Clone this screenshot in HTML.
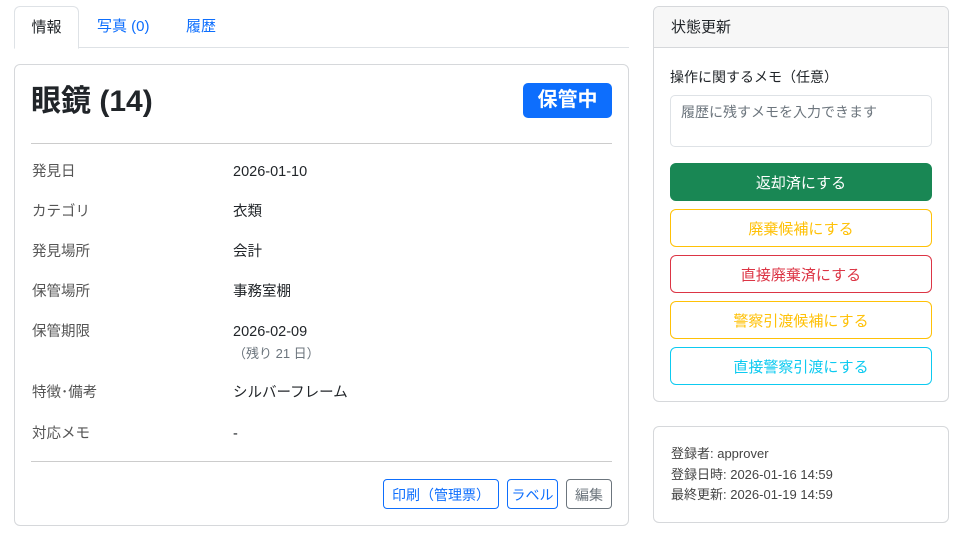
<!DOCTYPE html>
<html><head><meta charset="utf-8"><style>
*{box-sizing:border-box;margin:0;padding:0}
body{width:966px;height:544px;background:#fff;font-family:"Liberation Sans","Noto Sans CJK JP",sans-serif;color:#212529;font-size:14px;position:relative;overflow:hidden}
.abs{position:absolute}
.tabs{left:14px;top:6px;width:615px;height:42px;border-bottom:1px solid #dee2e6}
.tab{position:absolute;top:0;height:42px;line-height:42px;font-size:15px;color:#0d6efd}
.tab.act{left:0;width:65px;border:1px solid #dee2e6;border-bottom:1px solid #fff;border-radius:6px 6px 0 0;color:#212529;text-align:center;background:#fff;height:43px}
.card{border:1px solid #d6d8db;border-radius:6px;background:#fff}
.lbl{position:absolute;left:32px;color:#555;font-size:14.5px;line-height:20px}
.val{position:absolute;left:233px;font-size:14.5px;color:#212529;line-height:20px}
.btn{position:absolute;left:670px;width:262px;height:38px;border-radius:6px;text-align:center;line-height:38px;font-size:15px;border:1px solid}
.btn span{position:relative;top:1px}
.sb{position:absolute;top:479px;height:30px;border:1px solid;border-radius:4px;font-size:14px;line-height:30px;text-align:center}
</style></head><body>
<div class="abs tabs">
<div class="tab act">情報</div>
<div class="tab" style="left:83px">写真 (0)</div>
<div class="tab" style="left:172px">履歴</div>
</div>
<div class="abs card" style="left:14px;top:64px;width:615px;height:462px"></div>
<div class="abs" style="left:31px;top:82px;font-size:30px;font-weight:bold;line-height:40px">眼鏡 (14)</div>
<div class="abs" style="left:523px;top:83px;width:89px;height:35px;background:#0d6efd;color:#fff;border-radius:5px;font-size:20px;font-weight:bold;text-align:center;line-height:35px">保管中</div>
<div class="abs" style="left:31px;top:143px;width:581px;height:1px;background:#ccc"></div>
<div class="lbl" style="top:162px">発見日</div><div class="val" style="top:162px">2026-01-10</div>
<div class="lbl" style="top:202px">カテゴリ</div><div class="val" style="top:202px">衣類</div>
<div class="lbl" style="top:242px">発見場所</div><div class="val" style="top:242px">会計</div>
<div class="lbl" style="top:282px">保管場所</div><div class="val" style="top:282px">事務室棚</div>
<div class="lbl" style="top:322px">保管期限</div><div class="val" style="top:322px">2026-02-09</div>
<div class="val" style="top:344px;color:#6c757d;font-size:13px">（残り 21 日）</div>
<div class="lbl" style="top:383px">特徴･備考</div><div class="val" style="top:383px">シルバーフレーム</div>
<div class="lbl" style="top:424px">対応メモ</div><div class="val" style="top:424px">-</div>
<div class="abs" style="left:31px;top:461px;width:581px;height:1px;background:#ccc"></div>
<div class="sb" style="left:383px;width:116px;border-color:#0d6efd;color:#0d6efd">印刷（管理票）</div>
<div class="sb" style="left:507px;width:51px;border-color:#0d6efd;color:#0d6efd">ラベル</div>
<div class="sb" style="left:566px;width:46px;border-color:#6c757d;color:#6c757d">編集</div>

<div class="abs card" style="left:653px;top:6px;width:296px;height:396px;overflow:hidden">
<div style="height:41px;background:#f7f7f7;border-bottom:1px solid #d6d8db;padding-left:17px;line-height:42px;font-size:15px">状態更新</div>
</div>
<div class="abs" style="left:670px;top:67px;font-size:14px;line-height:20px">操作に関するメモ（任意）</div>
<div class="abs" style="left:670px;top:95px;width:262px;height:52px;border:1px solid #dee2e6;border-radius:5px;padding:6px 10px;color:#6c757d;font-size:14px">履歴に残すメモを入力できます</div>
<div class="btn" style="top:163px;background:#198754;border-color:#198754;color:#fff"><span>返却済にする</span></div>
<div class="btn" style="top:209px;border-color:#ffc107;color:#ffc107"><span>廃棄候補にする</span></div>
<div class="btn" style="top:255px;border-color:#dc3545;color:#dc3545"><span>直接廃棄済にする</span></div>
<div class="btn" style="top:301px;border-color:#ffc107;color:#ffc107"><span>警察引渡候補にする</span></div>
<div class="btn" style="top:347px;border-color:#0dcaf0;color:#0dcaf0"><span>直接警察引渡にする</span></div>

<div class="abs card" style="left:653px;top:426px;width:296px;height:97px"></div>
<div class="abs" style="left:671px;top:444px;font-size:13px;line-height:20.5px;color:#444">登録者: approver<br>登録日時: 2026-01-16 14:59<br>最終更新: 2026-01-19 14:59</div>
</body></html>
